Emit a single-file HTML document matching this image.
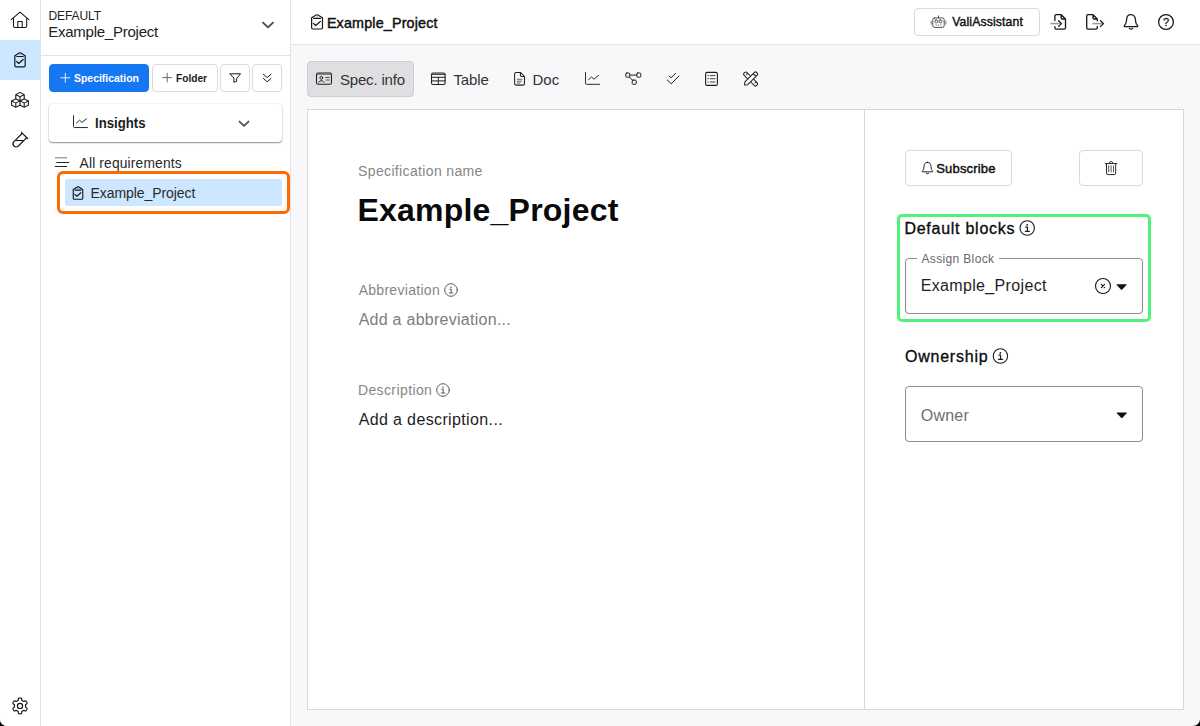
<!DOCTYPE html>
<html lang="en">
<head>
<meta charset="utf-8">
<title>Example_Project</title>
<style>
*{box-sizing:border-box;margin:0;padding:0}
html,body{width:1200px;height:726px;overflow:hidden;background:#000;font-family:"Liberation Sans",sans-serif;color:#121212}
#app{position:absolute;left:0;top:0;width:1200px;height:726px;background:#f8f8fa;border-radius:0 0 7px 7px;overflow:hidden}
.abs{position:absolute}
.t{position:absolute;white-space:nowrap;line-height:1}
#rail{left:0;top:0;width:41px;height:726px;background:#fff;border-right:1px solid #e2e2e2}
#railact{left:0;top:40px;width:40px;height:40px;background:#cce7ff}
#side{left:41px;top:0;width:249px;height:726px;background:#fff}
#sidehdr{left:41px;top:55px;width:249px;height:1px;background:#e2e2e2}
#sideborder{left:290px;top:0;width:1px;height:726px;background:#e3e3e5}
#topbar{left:291px;top:0;width:909px;height:45px;background:#fff;border-bottom:1px solid #e5e5e7}
.btn{position:absolute;border:1px solid #dadada;border-radius:4px;background:#fff}
#card{left:307px;top:109px;width:877px;height:601px;background:#fff;border:1px solid #d4d9dc}
#divider{left:864px;top:110px;width:1px;height:599px;background:#d4d9dc}
#icons{position:absolute;left:0;top:0;width:1200px;height:726px;overflow:visible}
.s{fill:none;stroke:#161616;stroke-width:1.2;stroke-linecap:round;stroke-linejoin:round}
</style>
</head>
<body>
<div id="app">
<div id="rail" class="abs"></div>
<div id="railact" class="abs"></div>
<div id="side" class="abs"></div>
<div id="sidehdr" class="abs"></div>
<div id="sideborder" class="abs"></div>
<div class="btn" style="left:49px;top:64px;width:100px;height:28px;background:#1677f2;border-color:#1677f2"></div>
<div class="btn" style="left:152px;top:64px;width:66px;height:28px"></div>
<div class="btn" style="left:220px;top:64px;width:30px;height:28px"></div>
<div class="btn" style="left:252px;top:64px;width:30px;height:28px"></div>
<div class="abs" style="left:49px;top:104px;width:233px;height:37.5px;background:#fff;border-radius:4px;box-shadow:0 1px 1.5px rgba(0,0,0,.42),0 0 2px rgba(0,0,0,.14)"></div>
<div class="abs" style="left:65px;top:179px;width:217px;height:27px;background:#cce7ff;border-radius:2px"></div>
<div class="abs" style="left:57px;top:171px;width:233px;height:43px;border:3px solid #ff6a00;border-radius:6px"></div>
<div id="topbar" class="abs"></div>
<div class="btn" style="left:914px;top:8px;width:126px;height:28px"></div>
<div class="abs" style="left:307px;top:61px;width:107px;height:36px;background:#dfdfe2;border:1px solid #cfcfd3;border-radius:4px"></div>
<div id="card" class="abs"></div>
<div id="divider" class="abs"></div>
<div class="btn" style="left:905px;top:150px;width:107px;height:36px"></div>
<div class="btn" style="left:1079px;top:150px;width:64px;height:36px"></div>
<div class="abs" style="left:897px;top:214px;width:254px;height:108px;border:3px solid #4ff27b;border-radius:5px"></div>
<div class="abs" style="left:905px;top:258px;width:238px;height:56px;border:1px solid #8c8c8c;border-radius:4px"></div>
<div class="abs" style="left:917px;top:256px;width:82px;height:5px;background:#fff"></div>
<div class="abs" style="left:905px;top:386px;width:238px;height:56px;border:1px solid #8c8c8c;border-radius:4px"></div>
<span class="t" style="left:48.40px;top:10.02px;font-size:12px;letter-spacing:-0.062px;color:#222;">DEFAULT</span>
<span class="t" style="left:48.15px;top:24.02px;font-size:15px;letter-spacing:-0.240px;color:#222;">Example_Project</span>
<span class="t" style="left:73.72px;top:73.27px;font-size:11.5px;color:#fff;transform:scaleX(0.9070);transform-origin:0 0;font-weight:bold;">Specification</span>
<span class="t" style="left:175.94px;top:73.27px;font-size:11.5px;color:#1c1c1c;transform:scaleX(0.8818);transform-origin:0 0;font-weight:bold;">Folder</span>
<span class="t" style="left:94.89px;top:115.77px;font-size:14.5px;color:#1c1c1c;transform:scaleX(0.9085);transform-origin:0 0;font-weight:bold;">Insights</span>
<span class="t" style="left:79.54px;top:156.62px;font-size:13.8px;letter-spacing:0.164px;color:#2a2a2a;">All requirements</span>
<span class="t" style="left:90.58px;top:186.02px;font-size:14px;letter-spacing:-0.080px;color:#2a2a2a;">Example_Project</span>
<span class="t" style="left:326.91px;top:15.87px;font-size:14.3px;letter-spacing:0.180px;color:#111;-webkit-text-stroke:0.45px #111;">Example_Project</span>
<span class="t" style="left:952.19px;top:15.92px;font-size:12.2px;letter-spacing:0.146px;color:#111;-webkit-text-stroke:0.4px #111;">ValiAssistant</span>
<span class="t" style="left:339.91px;top:72.02px;font-size:15px;letter-spacing:-0.175px;color:#333;">Spec. info</span>
<span class="t" style="left:453.44px;top:72.02px;font-size:15px;letter-spacing:-0.131px;color:#333;">Table</span>
<span class="t" style="left:532.50px;top:72.02px;font-size:15px;letter-spacing:0.000px;color:#333;">Doc</span>
<span class="t" style="left:358.12px;top:164.02px;font-size:14px;letter-spacing:0.349px;color:#868686;">Specification name</span>
<span class="t" style="left:357.38px;top:194.02px;font-size:32px;letter-spacing:0.223px;color:#0a0a0a;font-weight:bold;">Example_Project</span>
<span class="t" style="left:358.64px;top:283.02px;font-size:14px;letter-spacing:0.293px;color:#868686;">Abbreviation</span>
<span class="t" style="left:358.64px;top:311.52px;font-size:16px;letter-spacing:0.268px;color:#7d7d7d;">Add a abbreviation...</span>
<span class="t" style="left:357.88px;top:383.02px;font-size:14px;letter-spacing:0.400px;color:#868686;">Description</span>
<span class="t" style="left:358.64px;top:411.52px;font-size:16px;letter-spacing:0.372px;color:#1e1e1e;">Add a description...</span>
<span class="t" style="left:936.27px;top:162.02px;font-size:13px;letter-spacing:0.161px;color:#111;-webkit-text-stroke:0.45px #111;">Subscribe</span>
<span class="t" style="left:904.39px;top:220.52px;font-size:16px;letter-spacing:0.744px;color:#0a0a0a;-webkit-text-stroke:0.32px #0a0a0a;">Default blocks</span>
<span class="t" style="left:921.44px;top:253.02px;font-size:12px;letter-spacing:0.352px;color:#666;">Assign Block</span>
<span class="t" style="left:920.69px;top:277.52px;font-size:16px;letter-spacing:0.343px;color:#1e1e1e;">Example_Project</span>
<span class="t" style="left:904.95px;top:348.52px;font-size:16px;letter-spacing:0.780px;color:#0a0a0a;-webkit-text-stroke:0.32px #0a0a0a;">Ownership</span>
<span class="t" style="left:920.75px;top:407.52px;font-size:16px;letter-spacing:0.219px;color:#6e6e6e;">Owner</span>
<svg id="icons" viewBox="0 0 1200 726">
<path class="s" d="M11.2 19.7 L20 12.2 L28.8 19.7 M13.5 18 V26 a1.5 1.5 0 0 0 1.5 1.5 H25.2 a1.5 1.5 0 0 0 1.5 -1.5 V18 M17.8 27.4 V21.5 H22.2 V27.4" style="stroke-width:1.05"/>
<path class="s" style="stroke-width:1.2;stroke:#161616" d="M14.85 55.77 L19.17 53.07 Q20.00 52.61 20.83 53.07 L25.15 55.77 V65.72 Q25.15 66.93 23.96 66.93 H16.04 Q14.85 66.93 14.85 65.72 Z M16.78 56.51 H23.22 M16.50 61.35 L18.71 63.49 L23.13 59.49"/>
<circle cx="20" cy="54.84" r="0.41" fill="#161616"/>
<path class="s" style="stroke-width:1.1;stroke:#111" d="M73.24 189.42 L77.23 187.03 Q78.00 186.62 78.77 187.03 L82.76 189.42 V198.24 Q82.76 199.31 81.66 199.31 H74.34 Q73.24 199.31 73.24 198.24 Z M75.03 190.08 H80.97 M74.77 194.36 L76.81 196.26 L80.89 192.72"/>
<circle cx="78.0" cy="188.60" r="0.38" fill="#111"/>
<path class="s" style="stroke-width:1.2;stroke:#161616" d="M311.62 17.70 L316.18 14.98 Q317.05 14.51 317.92 14.98 L322.48 17.70 V27.76 Q322.48 28.98 321.22 28.98 H312.88 Q311.62 28.98 311.62 27.76 Z M313.66 18.45 H320.44 M313.36 23.34 L315.69 25.50 L320.35 21.46"/>
<circle cx="317.05" cy="16.76" r="0.44" fill="#161616"/>
<path d="M7.752.066a.5.5 0 0 1 .496 0l3.75 2.143a.5.5 0 0 1 .252.434v3.995l3.498 2A.5.5 0 0 1 16 9.07v4.286a.5.5 0 0 1-.252.434l-3.75 2.143a.5.5 0 0 1-.496 0l-3.502-2-3.502 2.001a.5.5 0 0 1-.496 0l-3.75-2.143A.5.5 0 0 1 0 13.357V9.071a.5.5 0 0 1 .252-.434L3.750 6.638V2.643a.5.5 0 0 1 .252-.434L7.752.066ZM4.25 7.504 1.508 9.071l2.742 1.567 2.742-1.567L4.25 7.504ZM7.5 9.933l-2.75 1.571v3.134l2.75-1.571V9.933Zm1 3.134 2.75 1.571v-3.134L8.5 9.933v3.134Zm.508-3.996 2.742 1.567 2.742-1.567-2.742-1.567-2.742 1.567Zm2.242-2.433V3.504L8.5 5.076V8.21l2.75-1.572ZM7.5 8.21V5.076L4.75 3.504v3.134L7.5 8.21ZM5.258 2.643 8 4.21l2.742-1.567L8 1.076 5.258 2.643ZM15 9.933l-2.75 1.571v3.134L15 13.067V9.933ZM3.75 14.638v-3.134L1 9.933v3.134l2.75 1.571Z" fill="#1c1c1c" fill-rule="evenodd" transform="translate(11 92) scale(1.125 0.985)"/>
<g transform="translate(19.25 140.7) rotate(45)"><path class="s" d="M-4.4 -7.45 H4.4 M-3.1 -7.45 V4.35 a3.1 3.1 0 0 0 6.2 0 V-7.45"/></g>
<path class="s" d="M16.2 140.5 H23.4" />
<path class="s" d="M25.57 705.90 L25.57 706.00 L25.57 706.10 L25.56 706.20 L25.56 706.30 L25.55 706.41 L25.55 706.51 L25.54 706.61 L25.54 706.71 L25.54 706.81 L25.56 706.92 L25.60 707.03 L25.68 707.16 L25.83 707.30 L26.06 707.47 L26.35 707.67 L26.63 707.88 L26.85 708.08 L26.98 708.26 L27.04 708.43 L27.06 708.57 L27.04 708.72 L27.01 708.85 L26.97 708.98 L26.92 709.11 L26.87 709.24 L26.81 709.36 L26.76 709.49 L26.70 709.61 L26.63 709.73 L26.57 709.85 L26.50 709.97 L26.43 710.09 L26.36 710.20 L26.29 710.32 L26.21 710.43 L26.13 710.54 L26.05 710.65 L25.96 710.75 L25.86 710.84 L25.75 710.93 L25.62 710.99 L25.46 711.02 L25.24 710.99 L24.97 710.89 L24.65 710.74 L24.34 710.58 L24.08 710.46 L23.89 710.40 L23.74 710.38 L23.63 710.40 L23.53 710.44 L23.44 710.49 L23.36 710.54 L23.28 710.60 L23.20 710.65 L23.11 710.71 L23.03 710.77 L22.95 710.82 L22.87 710.87 L22.78 710.92 L22.70 710.97 L22.61 711.02 L22.53 711.07 L22.44 711.12 L22.36 711.16 L22.27 711.21 L22.18 711.25 L22.09 711.30 L22.01 711.36 L21.93 711.42 L21.86 711.52 L21.80 711.66 L21.75 711.86 L21.72 712.16 L21.70 712.52 L21.67 712.88 L21.61 713.17 L21.53 713.38 L21.42 713.52 L21.30 713.60 L21.18 713.66 L21.05 713.70 L20.92 713.73 L20.79 713.75 L20.66 713.77 L20.53 713.78 L20.40 713.79 L20.26 713.79 L20.13 713.80 L20.00 713.80 L19.87 713.80 L19.74 713.79 L19.60 713.79 L19.47 713.78 L19.34 713.77 L19.21 713.75 L19.08 713.73 L18.95 713.70 L18.82 713.66 L18.70 713.60 L18.58 713.52 L18.47 713.38 L18.39 713.17 L18.33 712.88 L18.30 712.52 L18.28 712.16 L18.25 711.86 L18.20 711.66 L18.14 711.52 L18.07 711.42 L17.99 711.36 L17.91 711.30 L17.82 711.25 L17.73 711.21 L17.64 711.16 L17.56 711.12 L17.47 711.07 L17.39 711.02 L17.30 710.97 L17.22 710.92 L17.13 710.87 L17.05 710.82 L16.97 710.77 L16.89 710.71 L16.80 710.65 L16.72 710.60 L16.64 710.54 L16.56 710.49 L16.47 710.44 L16.37 710.40 L16.26 710.38 L16.11 710.40 L15.92 710.46 L15.66 710.58 L15.35 710.74 L15.03 710.89 L14.76 710.99 L14.54 711.02 L14.38 710.99 L14.25 710.93 L14.14 710.84 L14.04 710.75 L13.95 710.65 L13.87 710.54 L13.79 710.43 L13.71 710.32 L13.64 710.20 L13.57 710.09 L13.50 709.97 L13.43 709.85 L13.37 709.73 L13.30 709.61 L13.24 709.49 L13.19 709.36 L13.13 709.24 L13.08 709.11 L13.03 708.98 L12.99 708.85 L12.96 708.72 L12.94 708.57 L12.96 708.43 L13.02 708.26 L13.15 708.08 L13.37 707.88 L13.65 707.67 L13.94 707.47 L14.17 707.30 L14.32 707.16 L14.40 707.03 L14.44 706.92 L14.46 706.81 L14.46 706.71 L14.46 706.61 L14.45 706.51 L14.45 706.41 L14.44 706.30 L14.44 706.20 L14.43 706.10 L14.43 706.00 L14.43 705.90 L14.43 705.80 L14.43 705.70 L14.44 705.60 L14.44 705.50 L14.45 705.39 L14.45 705.29 L14.46 705.19 L14.46 705.09 L14.46 704.99 L14.44 704.88 L14.40 704.77 L14.32 704.64 L14.17 704.50 L13.94 704.33 L13.65 704.13 L13.37 703.92 L13.15 703.72 L13.02 703.54 L12.96 703.37 L12.94 703.23 L12.96 703.08 L12.99 702.95 L13.03 702.82 L13.08 702.69 L13.13 702.56 L13.19 702.44 L13.24 702.31 L13.30 702.19 L13.37 702.07 L13.43 701.95 L13.50 701.83 L13.57 701.71 L13.64 701.60 L13.71 701.48 L13.79 701.37 L13.87 701.26 L13.95 701.15 L14.04 701.05 L14.14 700.96 L14.25 700.87 L14.38 700.81 L14.54 700.78 L14.76 700.81 L15.03 700.91 L15.35 701.06 L15.66 701.22 L15.92 701.34 L16.11 701.40 L16.26 701.42 L16.37 701.40 L16.47 701.36 L16.56 701.31 L16.64 701.26 L16.72 701.20 L16.80 701.15 L16.89 701.09 L16.97 701.03 L17.05 700.98 L17.13 700.93 L17.22 700.88 L17.30 700.83 L17.39 700.78 L17.47 700.73 L17.56 700.68 L17.64 700.64 L17.73 700.59 L17.82 700.55 L17.91 700.50 L17.99 700.44 L18.07 700.38 L18.14 700.28 L18.20 700.14 L18.25 699.94 L18.28 699.64 L18.30 699.28 L18.33 698.92 L18.39 698.63 L18.47 698.42 L18.58 698.28 L18.70 698.20 L18.82 698.14 L18.95 698.10 L19.08 698.07 L19.21 698.05 L19.34 698.03 L19.47 698.02 L19.60 698.01 L19.74 698.01 L19.87 698.00 L20.00 698.00 L20.13 698.00 L20.26 698.01 L20.40 698.01 L20.53 698.02 L20.66 698.03 L20.79 698.05 L20.92 698.07 L21.05 698.10 L21.18 698.14 L21.30 698.20 L21.42 698.28 L21.53 698.42 L21.61 698.63 L21.67 698.92 L21.70 699.28 L21.72 699.64 L21.75 699.94 L21.80 700.14 L21.86 700.28 L21.93 700.38 L22.01 700.44 L22.09 700.50 L22.18 700.55 L22.27 700.59 L22.36 700.64 L22.44 700.68 L22.53 700.73 L22.61 700.78 L22.70 700.83 L22.78 700.88 L22.87 700.93 L22.95 700.98 L23.03 701.03 L23.11 701.09 L23.20 701.15 L23.28 701.20 L23.36 701.26 L23.44 701.31 L23.53 701.36 L23.63 701.40 L23.74 701.42 L23.89 701.40 L24.08 701.34 L24.34 701.22 L24.65 701.06 L24.97 700.91 L25.24 700.81 L25.46 700.78 L25.62 700.81 L25.75 700.87 L25.86 700.96 L25.96 701.05 L26.05 701.15 L26.13 701.26 L26.21 701.37 L26.29 701.48 L26.36 701.60 L26.43 701.71 L26.50 701.83 L26.57 701.95 L26.63 702.07 L26.70 702.19 L26.76 702.31 L26.81 702.44 L26.87 702.56 L26.92 702.69 L26.97 702.82 L27.01 702.95 L27.04 703.08 L27.06 703.23 L27.04 703.37 L26.98 703.54 L26.85 703.72 L26.63 703.92 L26.35 704.13 L26.06 704.33 L25.83 704.50 L25.68 704.64 L25.60 704.77 L25.56 704.88 L25.54 704.99 L25.54 705.09 L25.54 705.19 L25.55 705.29 L25.55 705.39 L25.56 705.50 L25.56 705.60 L25.57 705.70 L25.57 705.80 Z" />
<circle class="s" cx="20" cy="705.9" r="2.6"/>
<path class="s" d="M263 22.6 L268 27.4 L273 22.6" style="stroke:#4c4c4c;stroke-width:1.9"/>
<path class="s" d="M239.5 121.6 L244 125.9 L248.5 121.6" style="stroke:#555;stroke-width:1.9"/>
<path class="s" d="M60.8 77.8 H69.8 M65.3 73.3 V82.3" style="stroke:#eaf2ff;stroke-width:0.95"/>
<path class="s" d="M162.8 77.6 H171.6 M167.2 73.2 V82" style="stroke:#626262;stroke-width:0.95"/>
<path class="s" d="M230.1 73.8 H240.5 L236.7 78.4 V81.2 L233.9 82.3 V78.4 Z" style="stroke-width:1"/>
<path class="s" d="M263.4 74.2 L267.2 77.6 L271 74.2 M263.4 78.4 L267.2 81.8 L271 78.4" style="stroke-width:1"/>
<path class="s" d="M73.5 115.75 V126.55 a1 1 0 0 0 1 1 H87.5 M76.5 122.95 L79.5 120.25 L82.0 122.45 L86.5 118.75" style="stroke:#2a2a2a;stroke-width:1"/>
<path class="s" d="M585.5 72.5 V83.3 a1 1 0 0 0 1 1 H599.5 M588.5 79.7 L591.5 77.0 L594.0 79.2 L598.5 75.5" style="stroke:#2a2a2a;stroke-width:1"/>
<path class="s" d="M55.3 157.8 H66.8" style="stroke:#777;stroke-width:1"/>
<path class="s" d="M56.8 162.5 H68.8 M55.3 166.5 H66.8" style="stroke:#222;stroke-width:1"/>
<path class="s" d="M934.6 17.9 H942.4 a1.8 1.8 0 0 1 1.8 1.8 V25.6 a1.8 1.8 0 0 1 -1.8 1.8 H934.6 a1.8 1.8 0 0 1 -1.8 -1.8 V19.7 a1.8 1.8 0 0 1 1.8 -1.8 Z M938.5 17.9 V15.9" style="stroke:#3a3a3a;stroke-width:0.9"/>
<path class="s" d="M931.1 21 V24.2 M945.9 21 V24.2" style="stroke:#555;stroke-width:0.8"/>
<rect x="935" y="20" width="2.8" height="2.8" rx="0.9" class="s" style="stroke:#3a3a3a;stroke-width:0.8"/>
<rect x="939.2" y="20" width="2.8" height="2.8" rx="0.9" class="s" style="stroke:#3a3a3a;stroke-width:0.8"/>
<path class="s" d="M936 25 H936.4 M938.3 25 H938.7 M940.6 25 H941" style="stroke:#3a3a3a;stroke-width:0.8"/>
<path class="s" d="M1054.9 20.6 V16 a1.3 1.3 0 0 1 1.3 -1.3 H1061.2 L1065.5 19 V27.8 a1.3 1.3 0 0 1 -1.3 1.3 H1056.2 a1.3 1.3 0 0 1 -1.3 -1.3 V26.6 M1061.2 14.9 V17.9 a1.1 1.1 0 0 0 1.1 1.1 H1065.3" style="stroke-width:1.3"/>
<path class="s" d="M1050.4 23.6 H1060.3" style="stroke:#9a9a9a;stroke-width:1.5;stroke-linecap:butt"/>
<path class="s" d="M1058.6 20.8 L1061.5 23.6 L1058.6 26.4" style="stroke-width:1.3"/>
<path class="s" d="M1097.3 20.8 V19 L1093 14.7 H1088 a1.3 1.3 0 0 0 -1.3 1.3 V27.8 a1.3 1.3 0 0 0 1.3 1.3 H1096 a1.3 1.3 0 0 0 1.3 -1.3 V26.4 M1093 14.9 V17.9 a1.1 1.1 0 0 0 1.1 1.1 H1097.1" style="stroke-width:1.3"/>
<path class="s" d="M1092.4 23.6 H1102.3" style="stroke:#9a9a9a;stroke-width:1.5;stroke-linecap:butt"/>
<path class="s" d="M1100.6 20.8 L1103.5 23.6 L1100.6 26.4" style="stroke-width:1.3"/>
<path class="s" d="M1131.00 14.70 C1128.20 14.70 1126.60 17.00 1126.60 19.80 C1126.60 22.80 1125.80 24.40 1124.40 25.80 Q1124.10 26.50 1124.80 26.60 H1137.20 Q1137.90 26.50 1137.60 25.80 C1136.20 24.40 1135.40 22.80 1135.40 19.80 C1135.40 17.00 1133.80 14.70 1131.00 14.70 Z M1129.40 28.40 Q1131.00 30.00 1132.60 28.40" style="stroke:#1c1c1c;stroke-width:1.3"/>
<path class="s" d="M927.50 162.30 C925.26 162.30 923.98 164.14 923.98 166.38 C923.98 168.78 923.34 170.06 922.22 171.18 Q921.98 171.74 922.54 171.82 H932.46 Q933.02 171.74 932.78 171.18 C931.66 170.06 931.02 168.78 931.02 166.38 C931.02 164.14 929.74 162.30 927.50 162.30 Z M926.22 173.26 Q927.50 174.54 928.78 173.26" style="stroke:#1c1c1c;stroke-width:0.95"/>
<circle class="s" cx="1166" cy="22" r="7.4" style="stroke-width:1.25"/>
<text x="1166" y="25.9" text-anchor="middle" font-family="Liberation Sans, sans-serif" font-size="11" fill="#1a1a1a" stroke="#1a1a1a" stroke-width="0.3">?</text>
<rect class="s" x="316.5" y="73" width="15" height="11.3" rx="1.6" style="stroke:#202020;stroke-width:1.1"/>
<path class="s" d="M316.5 74.2 H331.5" style="stroke:#555;stroke-width:1"/>
<circle class="s" cx="321.3" cy="77.8" r="1.4" style="stroke:#202020;stroke-width:1"/>
<path class="s" d="M318.6 82.3 Q321.3 78.6 324 82.3" style="stroke:#202020;stroke-width:1"/>
<path class="s" d="M325.6 77.5 H329.3 M326.2 80 H329.3" style="stroke:#555;stroke-width:1.2"/>
<rect class="s" x="431.5" y="73" width="13.6" height="11.5" rx="1.6" style="stroke:#202020;stroke-width:1.1"/>
<path class="s" d="M431.5 74.3 H445.1" style="stroke:#444;stroke-width:1.2"/>
<path class="s" d="M431.5 77.3 H445.1 M431.5 80.9 H445.1 M438.3 77.3 V84.5" style="stroke:#202020;stroke-width:1"/>
<path class="s" d="M514.6 73.9 a1.5 1.5 0 0 1 1.5 -1.5 H520.4 L524.5 76.5 V83.6 a1.5 1.5 0 0 1 -1.5 1.5 H516.1 a1.5 1.5 0 0 1 -1.5 -1.5 Z M520.4 72.5 V75.2 a1.3 1.3 0 0 0 1.3 1.3 H524.4" style="stroke:#202020;stroke-width:1.05"/>
<path class="s" d="M517.3 79.3 H521.8 M517.3 81.2 H521.8 M517.3 83 H520" style="stroke:#555;stroke-width:0.9"/>
<rect class="s" x="625.8" y="73" width="4" height="4.2" rx="0.9" style="stroke:#202020;stroke-width:1"/>
<rect class="s" x="636.8" y="73" width="4" height="4.2" rx="0.9" style="stroke:#202020;stroke-width:1"/>
<rect class="s" x="632.2" y="80.1" width="4" height="4.2" rx="0.9" style="stroke:#202020;stroke-width:1"/>
<path class="s" d="M629.8 75.1 H636.8 M629.5 77.2 L632.4 80.1" style="stroke:#202020;stroke-width:1"/>
<path class="s" d="M669 76 L671 77.9 L675.6 73.3 M667.3 80 L671.2 83.8 L679 76" style="stroke:#202020;stroke-width:1"/>
<rect class="s" x="705.6" y="72.4" width="11.8" height="13" rx="1.5" style="stroke:#202020;stroke-width:1.1"/>
<path class="s" d="M710.3 75.6 H715 M710.3 78.7 H715 M710.3 82 H715" style="stroke:#444;stroke-width:1"/>
<path class="s" d="M707.8 75.6 H708.4 M707.8 78.7 H708.4 M707.8 82 H708.4" style="stroke:#444;stroke-width:1"/>
<g transform="translate(750.6 79) rotate(-45)"><path class="s" style="stroke:#202020;stroke-width:1.05" d="M-8.6 0 L-6 -2 H7.4 a1.4 1.4 0 0 1 1.4 1.4 V0.6 a1.4 1.4 0 0 1 -1.4 1.4 H-6 Z M5.6 -2 V2"/></g>
<g transform="translate(750.6 79) rotate(45)"><path class="s" style="stroke:#202020;stroke-width:1.05" d="M-2.6 -2 H-7.4 a1.4 1.4 0 0 0 -1.4 1.4 V0.6 a1.4 1.4 0 0 0 1.4 1.4 H-2.6 M2.6 -2 H7.4 a1.4 1.4 0 0 1 1.4 1.4 V0.6 a1.4 1.4 0 0 1 -1.4 1.4 H2.6 M-6 -2 V-0.4 M6 -2 V-0.4"/></g>
<path class="s" d="M1105.2 163.6 H1117 M1109.2 163.4 Q1109.2 161.5 1111.1 161.5 Q1113 161.5 1113 163.4" style="stroke:#2a2a2a;stroke-width:1"/>
<path class="s" d="M1106.5 163.8 V173 a1.6 1.6 0 0 0 1.6 1.6 H1114.1 a1.6 1.6 0 0 0 1.6 -1.6 V163.8" style="stroke:#2a2a2a;stroke-width:1"/>
<path class="s" d="M1108.7 166 V171.8 M1111.1 166 V171.8 M1113.5 166 V171.8" style="stroke:#444;stroke-width:0.9"/>
<circle class="s" cx="1027.2" cy="228" r="7.2" style="stroke:#1c1c1c;stroke-width:1.1"/>
<circle cx="1027.2" cy="224.90" r="0.90" fill="#1c1c1c"/>
<path class="s" d="M1025.70 227.10 H1027.40 V231.20 M1025.30 231.30 H1029.40" style="stroke:#1c1c1c;stroke-width:1.15"/>
<circle class="s" cx="1000.4" cy="356" r="7.2" style="stroke:#1c1c1c;stroke-width:1.1"/>
<circle cx="1000.4" cy="352.90" r="0.90" fill="#1c1c1c"/>
<path class="s" d="M998.90 355.10 H1000.60 V359.20 M998.50 359.30 H1002.60" style="stroke:#1c1c1c;stroke-width:1.15"/>
<circle class="s" cx="451" cy="290" r="6.3" style="stroke:#5a5a5a;stroke-width:1"/>
<circle cx="451" cy="287.29" r="0.79" fill="#5a5a5a"/>
<path class="s" d="M449.69 289.21 H451.18 V292.80 M449.34 292.89 H452.93" style="stroke:#5a5a5a;stroke-width:1.01"/>
<circle class="s" cx="443" cy="390" r="6.3" style="stroke:#5a5a5a;stroke-width:1"/>
<circle cx="443" cy="387.29" r="0.79" fill="#5a5a5a"/>
<path class="s" d="M441.69 389.21 H443.18 V392.80 M441.34 392.89 H444.93" style="stroke:#5a5a5a;stroke-width:1.01"/>
<circle class="s" cx="1103" cy="286" r="7.5" style="stroke-width:1.1"/>
<path class="s" d="M1101.3 284.3 L1104.7 287.7 M1104.7 284.3 L1101.3 287.7" style="stroke-width:1.1"/>
<path d="M1117 284.2 H1126.2 Q1127.2 284.3 1126.5 285.1 L1122.3 289.5 Q1121.6 290.1 1120.9 289.5 L1116.7 285.1 Q1116 284.3 1117 284.2 Z" fill="#111"/>
<path d="M1117.2 412.4 H1126.4 Q1127.4 412.5 1126.7 413.3 L1122.5 417.7 Q1121.8 418.3 1121.1 417.7 L1116.9 413.3 Q1116.2 412.5 1117.2 412.4 Z" fill="#111"/>
</svg>
</div>
</body>
</html>
